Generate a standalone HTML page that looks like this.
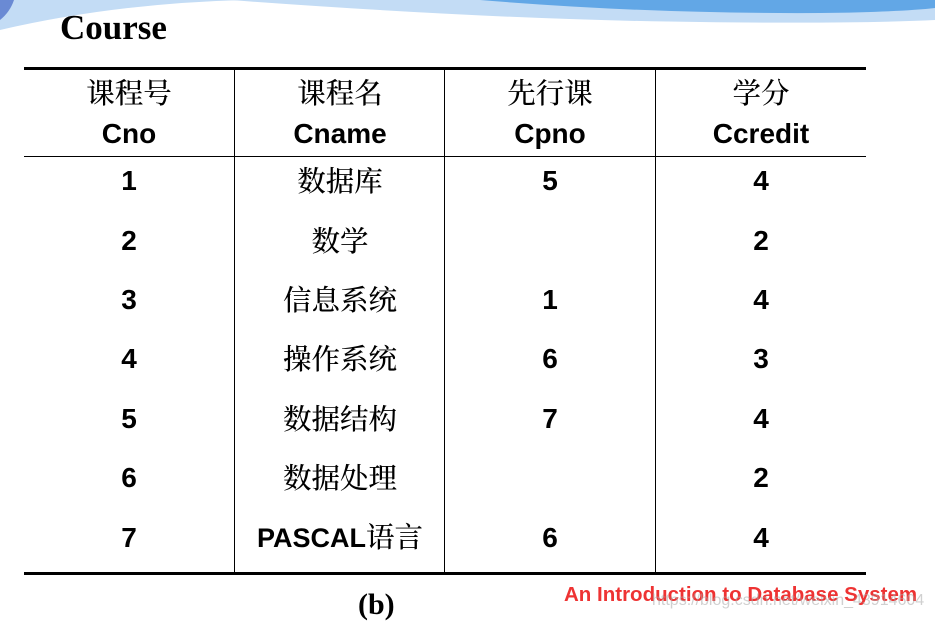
<!DOCTYPE html>
<html><head><meta charset="utf-8"><style>
body{margin:0;width:935px;height:623px;background:#fff;position:relative;overflow:hidden;font-family:"Liberation Sans","Noto Sans CJK SC",sans-serif}
.t{position:absolute;text-align:center;width:210px;font-size:28px;line-height:30px;color:#000}
.b{font-weight:bold}
.c{font-family:"Liberation Serif","Noto Serif CJK SC","Noto Sans CJK SC",serif;font-size:28.5px;font-weight:500;margin-top:2px}
.hl{position:absolute;background:#000}
</style></head><body>
<svg style="position:absolute;left:0;top:0" width="935" height="70">
<path d="M0 30 Q150 -5 330 0 L0 0Z" fill="#c3dcf5"/>
<path d="M230 0 Q500 20 700 22 Q850 24 935 20 L935 0Z" fill="#c3dcf5"/>
<path d="M480 0 Q650 14 820 13 Q900 12 935 8 L935 0Z" fill="#62a7e6"/>
<path d="M0 0 L14 0 Q10 12 0 20Z" fill="#6a8ad4"/>
</svg>
<div style="position:absolute;left:60px;top:8px;font-family:'Liberation Serif',serif;font-weight:bold;font-size:35px">Course</div>
<div class="hl" style="left:24px;top:67px;width:842px;height:3px"></div>
<div class="hl" style="left:24px;top:156px;width:842px;height:1px"></div>
<div class="hl" style="left:24px;top:572px;width:842px;height:3px"></div>
<div class="hl" style="left:234px;top:69px;width:1px;height:504px"></div>
<div class="hl" style="left:444px;top:69px;width:1px;height:504px"></div>
<div class="hl" style="left:655px;top:69px;width:1px;height:504px"></div>
<div class="t c" style="left:24px;top:78px">课程号</div>
<div class="t c" style="left:235px;top:78px">课程名</div>
<div class="t c" style="left:445px;top:78px">先行课</div>
<div class="t c" style="left:656px;top:78px">学分</div>
<div class="t b" style="left:24px;top:119px">Cno</div>
<div class="t b" style="left:235px;top:119px">Cname</div>
<div class="t b" style="left:445px;top:119px">Cpno</div>
<div class="t b" style="left:656px;top:119px">Ccredit</div>
<div style="position:absolute;left:0;top:166px">
<div class="t b" style="left:24px;top:0">1</div><div class="t c" style="left:235px;top:0">数据库</div><div class="t b" style="left:445px;top:0">5</div><div class="t b" style="left:656px;top:0">4</div>
<div class="t b" style="left:24px;top:60px">2</div><div class="t c" style="left:235px;top:60px">数学</div><div class="t b" style="left:656px;top:60px">2</div>
<div class="t b" style="left:24px;top:119px">3</div><div class="t c" style="left:235px;top:119px">信息系统</div><div class="t b" style="left:445px;top:119px">1</div><div class="t b" style="left:656px;top:119px">4</div>
<div class="t b" style="left:24px;top:178px">4</div><div class="t c" style="left:235px;top:178px">操作系统</div><div class="t b" style="left:445px;top:178px">6</div><div class="t b" style="left:656px;top:178px">3</div>
<div class="t b" style="left:24px;top:238px">5</div><div class="t c" style="left:235px;top:238px">数据结构</div><div class="t b" style="left:445px;top:238px">7</div><div class="t b" style="left:656px;top:238px">4</div>
<div class="t b" style="left:24px;top:297px">6</div><div class="t c" style="left:235px;top:297px">数据处理</div><div class="t b" style="left:656px;top:297px">2</div>
<div class="t b" style="left:24px;top:357px">7</div><div class="t" style="left:235px;top:357px"><b style="font-size:27px">PASCAL</b><span class="c">语言</span></div><div class="t b" style="left:445px;top:357px">6</div><div class="t b" style="left:656px;top:357px">4</div>
</div>
<div style="position:absolute;left:358px;top:588px;font-family:'Liberation Serif',serif;font-weight:bold;font-size:30px">(b)</div>
<div style="position:absolute;left:564px;top:583px;font-weight:bold;font-size:20.5px;color:#ee3333">An Introduction to Database System</div>
<div style="position:absolute;left:652px;top:592px;font-size:16px;color:rgba(170,170,170,0.55)">https://blog.csdn.net/weixin_43914604</div>
</body></html>
